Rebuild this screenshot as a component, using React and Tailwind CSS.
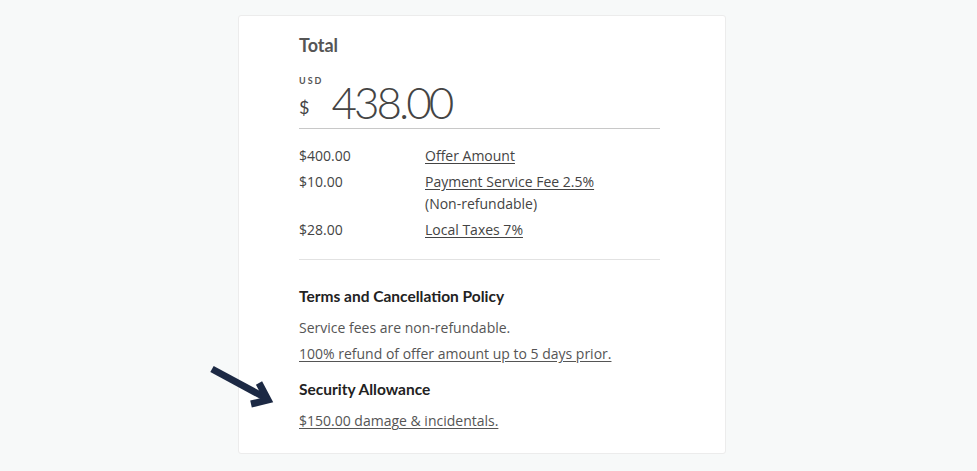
const LINE_ITEMS = [
  { amount: "$400.00", label: "Offer Amount" },
  { amount: "$10.00", label: "Payment Service Fee 2.5%", note: "(Non-refundable)" },
  { amount: "$28.00", label: "Local Taxes 7%" },
];

const heading = { fontFamily: "Lato, 'Noto Sans', sans-serif" };
const body = { fontFamily: "'Open Sans', 'Noto Sans', sans-serif" };

function PointerArrow() {
  return (
    <svg
      className="absolute left-[-30px] top-[349px]"
      width="70"
      height="62"
      viewBox="0 0 70 62"
      fill="none"
      aria-hidden
    >
      <path d="M3 4 L55 32" stroke="#1c2944" strokeWidth="7" strokeLinecap="butt" />
      <path
        d="M50 18 L59 35 L42 39"
        stroke="#1c2944"
        strokeWidth="7"
        strokeLinejoin="miter"
        strokeLinecap="butt"
      />
    </svg>
  );
}

export default function App() {
  return (
    <div className="min-h-[471px] bg-[#f7f9f9] flex justify-center pr-[13px] pt-[15px]" style={body}>
      <div className="relative w-[488px] h-[439px] bg-white border border-[#ececec] rounded-[3px] pl-[60px] pt-[17px]">
        <PointerArrow />
        <div className="w-[361px]">
          <h2 className="text-[18px] leading-[24px] font-bold text-[#555]" style={heading}>
            Total
          </h2>

          <div className="mt-[19px] border-b border-[#c8c8c8] pb-[8px]">
            <p
              className="text-[9px] leading-[10px] font-bold tracking-[2px] text-[#555]"
              style={heading}
            >
              USD
            </p>
            <div className="flex items-end gap-[22px] -mt-[2px]">
              <span className="text-[18px] leading-[24px] text-[#444] mb-[1px]" style={heading}>
                $
              </span>
              <span
                className="text-[44px] leading-[36px] font-light text-[#444] tracking-[-3px]"
                style={heading}
              >
                438.00
              </span>
            </div>
          </div>

          <div className="pt-[16px] pb-[18px] border-b border-[#e2e2e2] flex flex-col gap-[4px] text-[14px] leading-[22px] text-[#444]">
            {LINE_ITEMS.map((item) => (
              <div key={item.label} className="flex">
                <span className="w-[126px] shrink-0">{item.amount}</span>
                <div>
                  <a href="#" className="underline underline-offset-2">
                    {item.label}
                  </a>
                  {item.note && <p>{item.note}</p>}
                </div>
              </div>
            ))}
          </div>

          <h3 className="mt-[25px] text-[15.5px] leading-[22px] font-bold text-[#222]" style={heading}>
            Terms and Cancellation Policy
          </h3>
          <div className="mt-[10px] flex flex-col gap-[4px] text-[14px] leading-[22px] text-[#555]">
            <p>Service fees are non-refundable.</p>
            <a href="#" className="underline underline-offset-2">
              100% refund of offer amount up to 5 days prior.
            </a>
          </div>

          <h3 className="mt-[13px] text-[15.5px] leading-[22px] font-bold text-[#222]" style={heading}>
            Security Allowance
          </h3>
          <a
            href="#"
            className="block mt-[10px] text-[14px] leading-[22px] text-[#555] underline underline-offset-2"
          >
            $150.00 damage &amp; incidentals.
          </a>
        </div>
      </div>
    </div>
  );
}
